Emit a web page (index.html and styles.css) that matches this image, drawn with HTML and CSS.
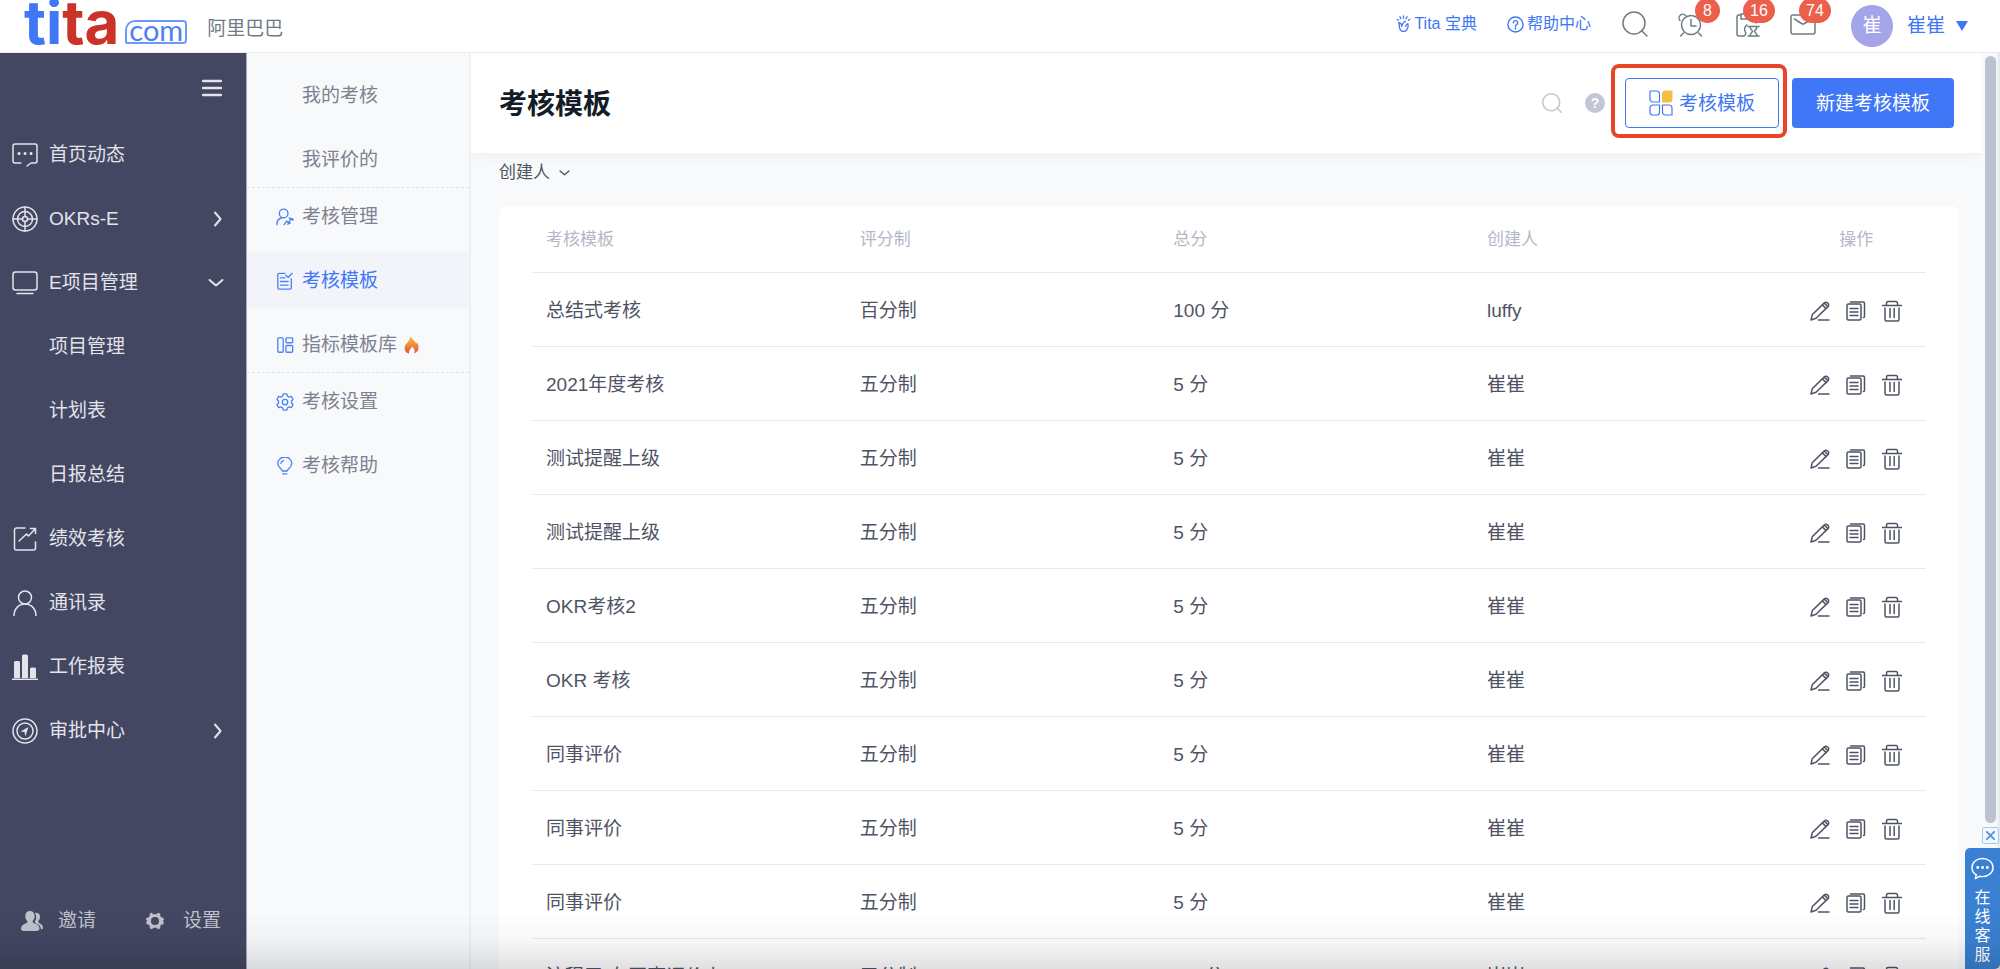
FILE: index.html
```html
<!DOCTYPE html>
<html lang="zh-CN">
<head>
<meta charset="utf-8">
<title>考核模板</title>
<meta name="viewport" content="width=device-width, initial-scale=1">
<link rel="stylesheet" href="styles.css">
</head>
<body>
<svg class="sprite" aria-hidden="true">
  <symbol id="i-edit" viewBox="0 0 20 20"><path d="M1 19l1.200-5.200L14.300 1.900a2.200 2.200 0 0 1 3.200 0l.5.5a2.200 2.200 0 0 1 0 3.200L6 17.300zM12.400 3.900l3.800 3.800M14.400 2.200l3.600 3.600M8.500 19H19"/></symbol>
  <symbol id="i-copy" viewBox="0 0 20 20"><rect x="1" y="3" width="14" height="16" rx="1.500"/><path d="M4.500 1H17a1.500 1.500 0 0 1 1.500 1.500V15.500a1 1 0 0 1-1 1M4 7.500h8M4 11h8M4 14.500h8"/></symbol>
  <symbol id="i-trash" viewBox="0 0 20 22"><path d="M0 5.500h20M4.500 5.500V3a1.500 1.500 0 0 1 1.500-1.500h8A1.500 1.500 0 0 1 15.500 3v2.500M3 8v11.500A1.500 1.500 0 0 0 4.500 21h11a1.500 1.500 0 0 0 1.500-1.500V8M8 8.500v9M12.200 8.500v9"/></symbol>
  <symbol id="i-search" viewBox="0 0 26 26"><ellipse cx="12" cy="12" rx="11" ry="11"/><path d="M19.500 19.500L25 25"/></symbol>
  <symbol id="i-right" viewBox="0 0 10 16"><path d="M2 1.500L7.500 8 2 14.500"/></symbol>
  <symbol id="i-down" viewBox="0 0 16 10"><path d="M1.500 2L8 7.500 14.500 2"/></symbol>
</svg>

<header class="topbar">
  <a class="logo" href="#" aria-label="tita.com"><span class="logo-ti">ti</span><span class="logo-ta">ta</span><span class="logo-com">com</span></a>
  <span class="company">阿里巴巴</span>
  <nav class="top-links">
    <a href="#"><svg class="ico-tip" viewBox="0 0 16 20"><path d="M3 9.500c.8 3-.2 4.500 1.500 7 1.500 2.300 5.500 2.300 7 0 1.700-2.600 2.200-4 1.500-6.500-2-.5-2 1-2.500 2.500M6 12.500c0-2-1.500-4.500-3.500-4M6 12.500c1-3 2-5 4-5.500M8 1v2.500M4 2l1 2M12 2l-1 2M1 5l1.500.7M15 5l-1.500.7"/></svg>Tita 宝典</a>
    <a href="#"><svg class="ico-help" viewBox="0 0 18 18"><circle cx="9" cy="9" r="8"/><path d="M6.700 7.200a2.300 2.300 0 1 1 3.400 2c-.8.4-1.100.8-1.100 1.600M9 12.500v1.200"/></svg>帮助中心</a>
  </nav>
  <div class="tools">
    <button class="tool" aria-label="搜索"><svg><use href="#i-search"/></svg></button>
    <button class="tool" aria-label="提醒"><svg viewBox="0 0 26 26"><circle cx="13" cy="14" r="9.500"/><path d="M13 8.500V15h5M5.500 22L2.500 25M20.500 22l3 3M2 9.500a3.700 3.700 0 1 1 5.500-5M24 9.500a3.700 3.700 0 1 0-5.500-5"/></svg><span class="badge">8</span></button>
    <button class="tool" aria-label="任务"><svg viewBox="0 0 26 26"><path d="M10 25H5a2 2 0 0 1-2-2V6a2 2 0 0 1 2-2h2M7 3h10v5H7zM17 4h3a2 2 0 0 1 2 2v6M10 25c2-1 2-3 1-5s0-5 2-6M14 15.500h11M14 25h11M16 15.500c0 3 2.500 3.500 2.500 4.700S16 22 16 25M23 15.500c0 3-2.500 3.500-2.500 4.700S23 22 23 25"/></svg><span class="badge">16</span></button>
    <button class="tool" aria-label="消息"><svg viewBox="0 0 26 26"><rect x="1" y="4" width="24" height="19" rx="2"/><path d="M4.500 8l7 4.500a3 3 0 0 0 3 0l7-4.500"/></svg><span class="badge">74</span></button>
  </div>
  <button class="user"><span class="avatar">崔</span><span>崔崔</span><svg viewBox="0 0 12 10"><path d="M0 0h12L6 10z"/></svg></button>
</header>

<div class="shell">
  <aside class="sidebar">
    <button class="menu-toggle" aria-label="收起菜单"><svg viewBox="0 0 20 18"><path d="M1 2h18M1 9h18M1 16h18"/></svg></button>
    <nav class="side-nav">
      <a href="#"><svg class="ico" viewBox="0 0 26 26"><path d="M9 21H3a2 2 0 0 1-2-2V4a2 2 0 0 1 2-2h20a2 2 0 0 1 2 2v15a2 2 0 0 1-2 2h-4l-4 3"/><path class="dots" d="M7 11.500h.1M13 11.500h.1M19 11.500h.1"/></svg><span>首页动态</span></a>
      <a href="#"><svg class="ico" viewBox="0 0 26 26"><circle cx="13" cy="13" r="12"/><circle cx="13" cy="13" r="7.500"/><circle cx="13" cy="13" r="2.500"/><path d="M13 1v9.500M13 15.500V25M1 13h9.500M15.500 13H25"/></svg><span>OKRs-E</span><svg class="arrow-r"><use href="#i-right"/></svg></a>
      <a href="#"><svg class="ico" viewBox="0 0 26 26"><rect x="1" y="2" width="24" height="18" rx="2.500"/><path d="M5 23.500h16"/></svg><span>E项目管理</span><svg class="arrow-d"><use href="#i-down"/></svg></a>
      <a class="child" href="#">项目管理</a>
      <a class="child" href="#">计划表</a>
      <a class="child" href="#">日报总结</a>
      <a href="#"><svg class="ico" viewBox="0 0 26 26"><path d="M13 2H4.500A2 2 0 0 0 2.500 4v18a2 2 0 0 0 2 2h17a2 2 0 0 0 2-2v-6M7 15l7.500-7 2 2 7-7.500M18.500 2.500h5v5"/></svg><span>绩效考核</span></a>
      <a href="#"><svg class="ico" viewBox="0 0 26 26"><circle cx="13" cy="7.500" r="6.500"/><path d="M2 26c0-7 4.500-12 11-12s11 5 11 12"/></svg><span>通讯录</span></a>
      <a href="#"><svg class="ico solid" viewBox="0 0 26 26"><path d="M2 24V8.500A1.500 1.500 0 0 1 3.500 7h3A1.500 1.500 0 0 1 8 8.500V24zM10 24V2a1.500 1.500 0 0 1 1.500-1.500h3A1.500 1.500 0 0 1 16 2v22zM18 24v-9a1.500 1.500 0 0 1 1.500-1.500h3A1.500 1.500 0 0 1 24 15v9zM0 24.500h26V26H0z"/></svg><span>工作报表</span></a>
      <a href="#"><svg class="ico" viewBox="0 0 26 26"><circle cx="13" cy="13" r="12"/><circle cx="13" cy="13" r="8"/><path class="fill" d="M16.500 9L8.500 13.500l4 .5.800 4.500z"/></svg><span>审批中心</span><svg class="arrow-r"><use href="#i-right"/></svg></a>
    </nav>
    <div class="side-foot">
      <a href="#"><svg viewBox="0 0 22 20"><path d="M9 0c3 0 4.700 2 4.700 5 0 2.200-.9 4-2.200 5.200.2 1.600 1.600 2 3.500 2.700 2.200.8 3.500 2.200 3.500 4.600 0 1.500-1 2.500-3 2.500H2.500C1 20 0 19 0 17.500c0-2.600 1.500-3.800 3.500-4.600 1.700-.7 2.900-1.100 3-2.700C5.200 9 4.300 7.200 4.300 5 4.300 2 6 0 9 0zM14 1.800c3-.3 5 1.200 5 4 0 2.200-.7 3.400-1.800 4.400.2 1.500 1 1.800 2.200 2.500 1.600.9 2.600 2.300 2.600 4.200 0 .8-.7 1.300-2 1.300-.1-3-2.200-5-5.500-6l-.8-1.200c1.800-2.700 2-6 .3-9.200z"/></svg>邀请</a>
      <a href="#"><svg viewBox="0 0 20 20"><path fill-rule="evenodd" d="M7.500 2.500L7 .8h-.8L4 2l.3 2.500L2.500 6H1L0 8.500 1.500 10 0 11.500 1 14h1.800l1.500 1.500L4 18l2.500 1.200L8.500 17.500h3l2 1.700L16 18l-.3-2.500L17.200 14H19l1-2.500L18.500 10 20 8.500 19 6h-1.800l-1.500-1.500L16 2 13.500.8l-2 1.700zM10 5.500a4.500 4.500 0 1 1 0 9 4.500 4.500 0 0 1 0-9z"/></svg>设置</a>
    </div>
  </aside>

  <nav class="subnav">
    <a href="#">我的考核</a>
    <a href="#">我评价的</a>
    <hr>
    <a href="#"><svg viewBox="0 0 20 20"><circle cx="8.500" cy="6" r="4.800"/><path d="M1 18.500c0-4 2.200-7.200 6-7.700M9 18.500l3-4 2 2 2-4 3 1M14.500 11l4.500 1.500M13 18l3-1.500"/></svg>考核管理</a>
    <a class="active" href="#"><svg viewBox="0 0 20 20"><path d="M10 1.500H3.500A1.500 1.500 0 0 0 2 3v14.500A1.500 1.500 0 0 0 3.500 19h12a1.500 1.500 0 0 0 1.500-1.500V7.500M5 6.500h5M5 10.500h8.500M5 14.500h8.500M11 3.500l2.500 2.500L18 1.500"/></svg>考核模板</a>
    <a href="#"><svg viewBox="0 0 20 20"><rect x="2" y="2" width="6" height="16" rx="1"/><rect x="11" y="2" width="7.500" height="5.500" rx="1"/><rect x="11" y="10.500" width="7.500" height="7.500" rx="1"/></svg>指标模板库<svg class="fire" viewBox="0 0 16 20"><defs><linearGradient id="flame" x1="0" y1="0" x2="0" y2="1"><stop offset="0" stop-color="#f7c243"/><stop offset=".5" stop-color="#ee8b3c"/><stop offset="1" stop-color="#de5738"/></linearGradient></defs><path d="M7 0c1 4 5.500 5 6 8.500C14 8 14.200 7 14.200 7c3.300 5.500 1.500 11-3.500 12.500C12.500 16 11 14 8.500 11.500 8.700 13.500 4 15.500 5.500 19.500-1.500 18 0 11.500 2 9c2-2.500 4.500-5 5-9z"/></svg></a>
    <hr>
    <a href="#"><svg viewBox="0 0 20 20"><path d="M8 1h4l.7 2.500 1.800 1 2.500-.7 2 3.400L17.200 9v2l1.800 1.800-2 3.400-2.500-.7-1.800 1L12 19H8l-.7-2.500-1.800-1-2.500.7-2-3.400L2.800 11V9L1 7.200l2-3.400 2.500.7 1.800-1z"/><circle cx="10" cy="10" r="3"/></svg>考核设置</a>
    <a href="#"><svg viewBox="0 0 20 20"><path d="M7 15.500c0-2-5-3.500-5-8.300a7.700 7.200 0 0 1 15.500 0c0 4.800-5 6.300-5 8.300zM7.500 18.800h4.500M5.500 7a4 4 0 0 1 3-3"/></svg>考核帮助</a>
  </nav>

  <main class="main">
    <div class="page-head">
      <h1>考核模板</h1>
      <button class="icon-btn" aria-label="搜索模板"><svg><use href="#i-search"/></svg></button>
      <button class="help-btn" aria-label="帮助">?</button>
      <div class="marked"><button class="btn outline"><svg viewBox="0 0 24 26"><path d="M1 1h6.500a3 3 0 0 1 3 3v8H4a3 3 0 0 1-3-3zM10.500 15v7.500a2.500 2.500 0 0 1-2.500 2.500H3.500A2.500 2.500 0 0 1 1 22.500V18a3 3 0 0 1 3-3zM13.500 15H20a3 3 0 0 1 3 3v7h-6.500a3 3 0 0 1-3-3z"/><path class="leaf" d="M13 12.500V4a3.500 3.500 0 0 1 3.500-3.500h7V9a3.500 3.500 0 0 1-3.500 3.500z"/></svg><span>考核模板</span></button></div>
      <button class="btn primary"><span>新建考核模板</span></button>
    </div>
    <div class="content">
      <button class="filter">创建人<svg><use href="#i-down"/></svg></button>
      <section class="card">
        <table>
          <thead><tr><th>考核模板</th><th>评分制</th><th>总分</th><th>创建人</th><th class="ops">操作</th></tr></thead>
          <tbody>
            <tr><td>总结式考核</td><td>百分制</td><td>100 分</td><td>luffy</td><td><div class="actions"><button aria-label="编辑"><svg><use href="#i-edit"/></svg></button><button aria-label="复制"><svg><use href="#i-copy"/></svg></button><button aria-label="删除"><svg><use href="#i-trash"/></svg></button></div></td></tr>
            <tr><td>2021年度考核</td><td>五分制</td><td>5 分</td><td>崔崔</td><td><div class="actions"><button aria-label="编辑"><svg><use href="#i-edit"/></svg></button><button aria-label="复制"><svg><use href="#i-copy"/></svg></button><button aria-label="删除"><svg><use href="#i-trash"/></svg></button></div></td></tr>
            <tr><td>测试提醒上级</td><td>五分制</td><td>5 分</td><td>崔崔</td><td><div class="actions"><button aria-label="编辑"><svg><use href="#i-edit"/></svg></button><button aria-label="复制"><svg><use href="#i-copy"/></svg></button><button aria-label="删除"><svg><use href="#i-trash"/></svg></button></div></td></tr>
            <tr><td>测试提醒上级</td><td>五分制</td><td>5 分</td><td>崔崔</td><td><div class="actions"><button aria-label="编辑"><svg><use href="#i-edit"/></svg></button><button aria-label="复制"><svg><use href="#i-copy"/></svg></button><button aria-label="删除"><svg><use href="#i-trash"/></svg></button></div></td></tr>
            <tr><td>OKR考核2</td><td>五分制</td><td>5 分</td><td>崔崔</td><td><div class="actions"><button aria-label="编辑"><svg><use href="#i-edit"/></svg></button><button aria-label="复制"><svg><use href="#i-copy"/></svg></button><button aria-label="删除"><svg><use href="#i-trash"/></svg></button></div></td></tr>
            <tr><td>OKR 考核</td><td>五分制</td><td>5 分</td><td>崔崔</td><td><div class="actions"><button aria-label="编辑"><svg><use href="#i-edit"/></svg></button><button aria-label="复制"><svg><use href="#i-copy"/></svg></button><button aria-label="删除"><svg><use href="#i-trash"/></svg></button></div></td></tr>
            <tr><td>同事评价</td><td>五分制</td><td>5 分</td><td>崔崔</td><td><div class="actions"><button aria-label="编辑"><svg><use href="#i-edit"/></svg></button><button aria-label="复制"><svg><use href="#i-copy"/></svg></button><button aria-label="删除"><svg><use href="#i-trash"/></svg></button></div></td></tr>
            <tr><td>同事评价</td><td>五分制</td><td>5 分</td><td>崔崔</td><td><div class="actions"><button aria-label="编辑"><svg><use href="#i-edit"/></svg></button><button aria-label="复制"><svg><use href="#i-copy"/></svg></button><button aria-label="删除"><svg><use href="#i-trash"/></svg></button></div></td></tr>
            <tr><td>同事评价</td><td>五分制</td><td>5 分</td><td>崔崔</td><td><div class="actions"><button aria-label="编辑"><svg><use href="#i-edit"/></svg></button><button aria-label="复制"><svg><use href="#i-copy"/></svg></button><button aria-label="删除"><svg><use href="#i-trash"/></svg></button></div></td></tr>
            <tr><td>流程三-有同事评价上</td><td>五分制</td><td>2.5 分</td><td>崔崔</td><td><div class="actions"><button aria-label="编辑"><svg><use href="#i-edit"/></svg></button><button aria-label="复制"><svg><use href="#i-copy"/></svg></button><button aria-label="删除"><svg><use href="#i-trash"/></svg></button></div></td></tr>
          </tbody>
        </table>
      </section>
    </div>
  </main>
  <div class="track"><div class="thumb"></div></div>
</div>

<div class="service">
  <button class="service-close" aria-label="关闭"><svg viewBox="0 0 10 10"><path d="M1 1l8 8M9 1L1 9"/></svg></button>
  <button class="service-tab"><svg viewBox="0 0 24 24"><path d="M5.500 18.500C2.500 17 1 14 1 11 1 5.500 6 1.500 12 1.500s11 4 11 9.500-5 9.500-11 9.500c-1.300 0-2.300-.1-3.300-.4L4.500 22.500z"/><path class="dots" d="M7 11h.1M12 11h.1M17 11h.1"/></svg><span>在线客服</span></button>
</div>
</body>
</html>
```
FILE: styles.css
```css
* { box-sizing: border-box; }

body {
  margin: 0;
  height: 100vh;
  display: flex;
  flex-direction: column;
  overflow: hidden;
  background: #f8f9fb;
  color: #4f5465;
  font: 400 19px/24px "Liberation Sans", "Noto Sans CJK SC", sans-serif;
}

/* soft shade along the lower window edge */
body::after {
  content: "";
  position: fixed;
  inset: auto 0 0;
  height: 56px;
  background: linear-gradient(to bottom, rgba(0, 0, 0, 0), rgba(0, 0, 0, .03) 50%, rgba(0, 0, 0, .12));
  pointer-events: none;
}

a { color: inherit; text-decoration: none; }
button { margin: 0; padding: 0; border: 0; background: none; font: inherit; color: inherit; cursor: pointer; }
svg { display: block; flex: none; fill: none; stroke: currentColor; stroke-width: 1.5; stroke-linecap: round; stroke-linejoin: round; }
.sprite { position: absolute; width: 0; height: 0; }
.dots { stroke-width: 3; }

/* top bar */
.topbar {
  flex: none;
  height: 53px;
  display: flex;
  align-items: center;
  padding: 0 32px 0 24px;
  background: #fff;
  border-bottom: 1px solid #e9ebf0;
}
.logo { display: flex; align-items: flex-end; height: 44px; align-self: flex-start; font: 700 60px/44px Inter, sans-serif; }
.logo-ti { color: #4077f6; }
.logo-ta { color: #cb3228; }
.logo-com {
  height: 24px;
  margin-left: 6px;
  padding: 0 2px;
  border: 2px solid #6b98fa;
  border-radius: 10px 4px 4px 2px;
  color: #4d80f6;
  font: 400 29px/16px Lato, sans-serif;
}
.company { margin-left: 20px; padding-top: 5px; color: #6f7c85; }
.top-links { display: flex; gap: 30px; margin-left: auto; padding-bottom: 4px; color: #4077f6; font-size: 16px; }
.top-links a { display: flex; align-items: center; gap: 3px; }
.ico-tip { width: 15px; height: 18px; }
.ico-help { width: 17px; height: 17px; }
.tools { display: flex; gap: 30px; margin-left: 31px; padding-bottom: 4px; color: #6f7c85; }
.tool { position: relative; width: 26px; height: 26px; }
.tool svg { width: 26px; height: 26px; }
.badge {
  position: absolute;
  left: 17px;
  top: -13px;
  min-width: 25px;
  height: 25px;
  padding: 0 7px;
  border-radius: 13px;
  background: #eb5f4c;
  color: #fff;
  font: 16px/25px "Liberation Sans", sans-serif;
}
.tool:nth-child(n+3) .badge { left: 9px; }
.user { display: flex; align-items: center; margin-left: 35px; color: #4077f6; }
.avatar { width: 42px; height: 42px; margin-right: 14px; border-radius: 50%; background: #a3a4ea; color: #fff; line-height: 42px; }
.user svg { width: 12px; height: 10px; margin-left: 11px; fill: currentColor; stroke: none; }

.shell { flex: 1; min-height: 0; display: flex; }

/* dark sidebar */
.sidebar { flex: none; width: 247px; display: flex; flex-direction: column; background: #444762; border-right: 1px solid #a5a9bc; color: #e2e4ea; }
.menu-toggle { align-self: flex-end; margin: 26px 24px 25px 0; }
.menu-toggle svg { width: 20px; height: 18px; stroke-width: 2.5; }
.side-nav a { display: flex; align-items: center; height: 64px; padding: 2px 22px 0 12px; }
.side-nav .ico { width: 26px; height: 26px; margin-right: 11px; }
.side-nav .child { padding-left: 49px; }
.side-nav .solid { fill: currentColor; stroke: none; }
.fill { fill: currentColor; stroke: none; }
.arrow-r { width: 10px; height: 16px; margin: 0 1px 0 auto; stroke-width: 2; }
.arrow-d { width: 16px; height: 10px; margin-left: auto; stroke-width: 2; }
.side-foot { display: flex; justify-content: space-between; margin-top: auto; padding: 0 25px 36px 21px; color: #bfc1cb; }
.side-foot a { display: flex; align-items: center; gap: 15px; }
.side-foot a + a { gap: 19px; }
.side-foot svg { width: 22px; height: 20px; fill: currentColor; stroke: none; }
.side-foot a + a svg { width: 18px; height: 18px; }

/* secondary menu */
.subnav { flex: none; width: 224px; padding-top: 14px; border-right: 2px solid #eef0f4; background: #f8f9fb; color: #7d8290; }
.subnav a { display: flex; align-items: center; gap: 8px; height: 56px; padding: 2px 0 0 55px; }
.subnav a svg { width: 18px; height: 18px; color: #4f82f7; margin-left: -26px; }
.subnav a + a { margin-top: 8px; }
.subnav a.active { background: #f3f4fa; color: #4077f6; }
.subnav a .fire { width: 15px; margin-left: -1px; fill: url(#flame); stroke: none; }
.subnav hr { height: 0; margin: 0; border: 0; border-top: 1px dashed #e0e2e7; }

/* main column */
.main { flex: 1; min-width: 0; overflow: hidden; }
.page-head {
  position: relative;
  display: flex;
  align-items: center;
  height: 100px;
  padding: 0 28px;
  background: #fff;
  box-shadow: 0 2px 12px rgba(80, 110, 150, .08);
}
h1 { margin: 0 auto 0 0; padding-top: 4px; color: #141c28; font-size: 28px; line-height: 40px; font-weight: 700; }
.icon-btn { margin-right: 23px; color: #c3c7d3; }
.icon-btn svg { width: 20px; height: 20px; stroke-width: 2; }
.help-btn { width: 20px; height: 20px; margin-right: 20px; border-radius: 50%; background: #c3c6d4; color: #fff; font: 700 14px/20px "Liberation Sans", sans-serif; }
.btn { display: flex; align-items: center; justify-content: center; gap: 6px; height: 50px; padding: 0 24px; border-radius: 4px; }
.btn span { padding-top: 2px; }
.outline { border: 1px solid #4077f6; background: #fff; color: #4077f6; padding: 0 23px; }
.outline svg { width: 24px; height: 26px; stroke-width: 1.2; }
.outline .leaf { fill: #f4c043; stroke: none; }
.primary { background: #4077f6; color: #fff; }
.marked { position: relative; margin-right: 13px; }
.marked::after { content: ""; position: absolute; inset: -14px -8px -10px -14px; border: 4px solid #ea4427; border-radius: 8px; pointer-events: none; }

.content { padding: 0 23px 24px 28px; }
.filter { display: flex; align-items: center; gap: 9px; height: 53px; padding-bottom: 14px; font-size: 17px; }
.filter svg { width: 11px; height: 8px; stroke-width: 2; }
.card { padding: 0 33px; border-radius: 8px; background: #fff; }
table { width: 100%; border-collapse: separate; border-spacing: 0; table-layout: fixed; }
th, td { padding: 0 14px; border-bottom: 1px solid #e8e9ed; text-align: left; font-weight: 400; white-space: nowrap; }
th { width: 22.5%; height: 67px; padding-top: 2px; color: #b3b8c5; font-size: 17px; }
th.ops { width: 10%; text-align: center; }
td { height: 74px; padding-top: 2px; }
.actions { display: flex; justify-content: center; gap: 16px; }
.actions svg { width: 20px; height: 22px; }

.track { flex: none; width: 18px; padding: 3px 4px 0 3px; background: linear-gradient(to right, #f8f9fb 14px, #e6e7e9); }
.thumb { height: 84%; border-radius: 6px; background: #bcc2d2; }

/* floating customer service tab */
.service { position: fixed; right: 0; bottom: 0; width: 35px; display: flex; flex-direction: column; align-items: flex-end; gap: 4px; }
.service-close { display: grid; place-items: center; width: 17px; height: 17px; margin-right: 1px; border: 1px solid #9ccbf2; border-radius: 2px; background: #f1f8fe; color: #4b93d8; }
.service-close svg { width: 9px; height: 9px; stroke-width: 2; }
.service-tab { display: flex; flex-direction: column; align-items: center; gap: 8px; width: 35px; padding: 9px 0 5px; border-radius: 5px 0 5px 0; background: #3a80d2; color: #fff; font-size: 16px; line-height: 19px; }
.service-tab svg { width: 23px; height: 23px; }
.service-tab span { width: 16px; }
```
